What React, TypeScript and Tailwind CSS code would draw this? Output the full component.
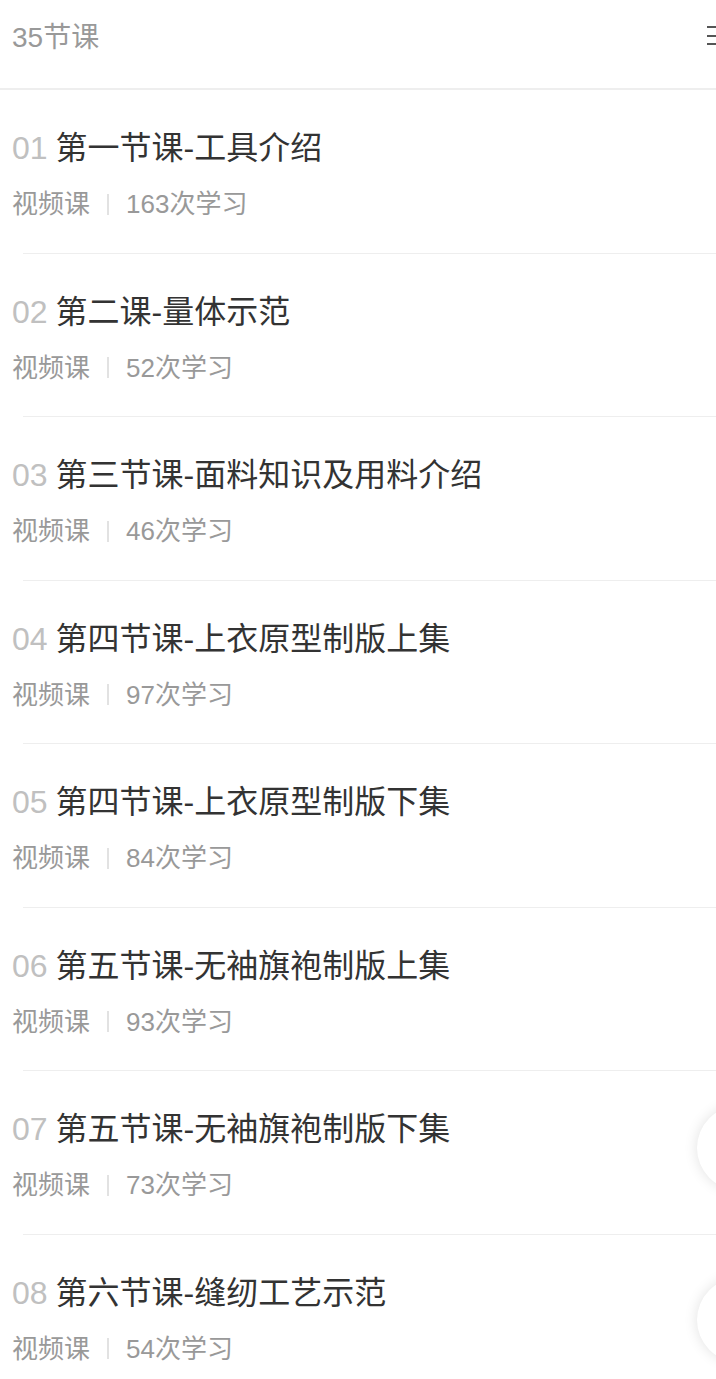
import React from "react";

const lessons = [
  { n: "01", t: "第一节课-工具介绍", c: 163 },
  { n: "02", t: "第二课-量体示范", c: 52 },
  { n: "03", t: "第三节课-面料知识及用料介绍", c: 46 },
  { n: "04", t: "第四节课-上衣原型制版上集", c: 97 },
  { n: "05", t: "第四节课-上衣原型制版下集", c: 84 },
  { n: "06", t: "第五节课-无袖旗袍制版上集", c: 93 },
  { n: "07", t: "第五节课-无袖旗袍制版下集", c: 73 },
  { n: "08", t: "第六节课-缝纫工艺示范", c: 54 },
];

const font = { fontFamily: '"Liberation Sans", "Noto Sans CJK SC", sans-serif' };

export default function App() {
  return (
    <div className="w-[716px] h-[1379px] overflow-hidden bg-white relative" style={font}>
      <div className="flex items-start h-[90px] border-b-2 border-[#eeeeee] overflow-hidden">
        <div className="pl-3 pt-[20px] text-[28px] leading-[36px] text-[#999999]">35节课</div>
        <div className="ml-auto mr-[-14px] pt-[26px] flex flex-col gap-[6.5px] w-[23px]">
          <div className="h-[2px] bg-[#555555]" />
          <div className="h-[2px] bg-[#555555]" />
          <div className="h-[2px] bg-[#555555]" />
        </div>
      </div>
      {lessons.map((l) => (
        <div key={l.n}>
          <div className="px-3 pt-[36px] pb-[30.5px]">
            <div className="flex text-[32px] leading-[44px] text-[#333333] whitespace-nowrap">
              <span className="text-[#c0c0c0]">{l.n}</span>
              <span className="ml-[8px]">{l.t}</span>
            </div>
            <div className="mt-[16px] flex items-center text-[26px] leading-[36px] text-[#999999]">
              <span>视频课</span>
              <span className="mx-[17px] w-[2px] h-[21px] bg-[#e2e2e2]" />
              <span>{l.c}次学习</span>
            </div>
          </div>
          <div className="ml-[23px] h-px bg-[#eeeeee]" />
        </div>
      ))}
      <div className="absolute left-[697px] top-[1106px] w-[84px] h-[84px] rounded-full bg-white shadow-[0_0_14px_rgba(0,0,0,0.12)]" />
      <div className="absolute left-[697px] top-[1278px] w-[84px] h-[84px] rounded-full bg-white shadow-[0_0_14px_rgba(0,0,0,0.12)]" />
    </div>
  );
}
